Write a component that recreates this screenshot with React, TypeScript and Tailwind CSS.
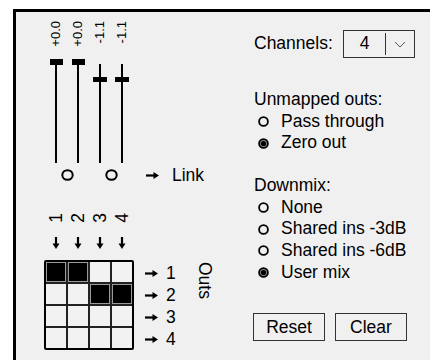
import React from 'react';

const sliders = [
  { label: '+0.0', db: 0 },
  { label: '+0.0', db: 0 },
  { label: '-1.1', db: -1.1 },
  { label: '-1.1', db: -1.1 },
];

const matrix = [
  [1, 1, 0, 0],
  [0, 0, 1, 1],
  [0, 0, 0, 0],
  [0, 0, 0, 0],
];

const ArrowRight = () => (
  <svg width="13" height="9" viewBox="0 0 13 9">
    <path d="M0 4.5H9" stroke="#000" strokeWidth="2.2" />
    <polygon points="7.5,1 13,4.5 7.5,8" fill="#000" />
  </svg>
);

const ArrowDown = () => (
  <svg width="8" height="12" viewBox="0 0 8 12">
    <path d="M4 0V8" stroke="#000" strokeWidth="2.2" />
    <polygon points="0.5,6.5 7.5,6.5 4,12" fill="#000" />
  </svg>
);

const Ring = () => (
  <svg width="13" height="12" viewBox="0 0 13 12">
    <ellipse cx="6.5" cy="6" rx="5.2" ry="4.8" fill="none" stroke="#000" strokeWidth="2" />
  </svg>
);

const Radio = ({ checked }: { checked?: boolean }) => (
  <svg width="11" height="11" viewBox="0 0 11 11">
    <circle cx="5.5" cy="5.5" r="4.4" fill={checked ? '#8a8a8a' : 'none'} stroke="#000" strokeWidth="1.8" />
    {checked && <circle cx="5.5" cy="5.5" r="2.6" fill="#000" />}
  </svg>
);

const RadioRow = ({ label, checked }: { label: string; checked?: boolean }) => (
  <div className="flex items-center pl-[5px]">
    <Radio checked={checked} />
    <span className="ml-[12px]">{label}</span>
  </div>
);

const LeftPanel = () => (
  <div className="w-[237px] pl-[29px] pt-[9px]">
    {/* dB read-outs */}
    <div className="flex h-[37px] items-start">
      {sliders.map((s, i) => (
        <div key={i} className="flex w-[22px] justify-center">
          <span className="rotate-180 text-[13px] leading-[14px] [writing-mode:vertical-rl]">{s.label}</span>
        </div>
      ))}
    </div>

    {/* faders */}
    <div className="flex h-[106px]">
      {sliders.map((s, i) => (
        <div key={i} className="relative flex w-[22px] flex-col items-center">
          <div className="mt-[6px] h-[99px] w-[2px] bg-black" />
          <div
            className={`absolute bg-black ${s.db === 0 ? 'h-[6px] w-[13px]' : 'h-[5px] w-[14px]'}`}
            style={{ top: s.db === 0 ? 1 : 1 + Math.round(-s.db * 16.4) }}
          />
        </div>
      ))}
    </div>

    <div className="flex h-[22px] items-center">
      <div className="flex w-[44px] justify-center">
        <Ring />
      </div>
      <div className="flex w-[44px] justify-center">
        <Ring />
      </div>
      <div className="ml-[13px] flex">
        <ArrowRight />
      </div>
      <span className="ml-[13px]">Link</span>
    </div>

    {/* input numbers */}
    <div className="mt-[22px] flex h-[20px] items-center">
      {[1, 2, 3, 4].map((n) => (
        <div key={n} className="flex w-[22px] justify-center">
          <span className="rotate-180 leading-[17px] [writing-mode:vertical-rl]">{n}</span>
        </div>
      ))}
    </div>
    <div className="mt-[8px] flex h-[14px] items-center">
      {[1, 2, 3, 4].map((n) => (
        <div key={n} className="flex w-[22px] justify-center">
          <ArrowDown />
        </div>
      ))}
    </div>

    <div className="-ml-px mt-[10px] flex items-start">
      <div className="grid w-fit grid-cols-4 gap-[2px] rounded-[2px] border-2 border-black bg-[#222]">
        {matrix.flat().map((v, i) => (
          <div
            key={i}
            className={v ? 'h-[20px] w-[20px] border border-[#9a9a9a] bg-black' : 'h-[20px] w-[20px] bg-[#f2f2f2]'}
          />
        ))}
      </div>
      <div className="ml-[11px] flex flex-col pt-[2px]">
        {[1, 2, 3, 4].map((n) => (
          <div key={n} className="flex h-[22px] items-center">
            <ArrowRight />
            <span className="ml-[8px]">{n}</span>
          </div>
        ))}
      </div>
      <span className="ml-[22px] mt-[2px] leading-[14px] [writing-mode:vertical-rl]">Outs</span>
    </div>
  </div>
);

const RightPanel = () => (
  <div className="flex-1 pt-[18px] leading-[21.67px]">
    <div className="flex h-[28px] items-center">
      <span className="w-[90px] pl-px">Channels:</span>
      <div className="flex h-[28px] w-[72px] border border-[#333]">
        <div className="flex w-[41px] items-center justify-center">4</div>
        <div className="h-[22px] w-px self-center bg-[#333]" />
        <div className="flex flex-1 items-center justify-center">
          <svg width="12" height="7" viewBox="0 0 12 7">
            <polyline points="1,1 6,6 11,1" fill="none" stroke="#555" strokeWidth="1" />
          </svg>
        </div>
      </div>
    </div>

    <div className="mt-[31px] pl-px">Unmapped outs:</div>
    <RadioRow label="Pass through" />
    <RadioRow label="Zero out" checked />

    <div className="mt-[21px] pl-px">Downmix:</div>
    <RadioRow label="None" />
    <RadioRow label="Shared ins -3dB" />
    <RadioRow label="Shared ins -6dB" />
    <RadioRow label="User mix" checked />

    <div className="mt-[30px] flex gap-[10px]">
      <button className="h-[28px] w-[72px] border border-[#333] bg-[#f0f0f0]">Reset</button>
      <button className="h-[28px] w-[72px] border border-[#333] bg-[#f0f0f0]">Clear</button>
    </div>
  </div>
);

export default function App() {
  return (
    <div className="h-[360px] w-[430px] overflow-hidden bg-white pl-[13px] pt-[9px] font-['Liberation_Sans',Arial,sans-serif] text-[17.5px] text-black">
      <div className="flex h-full border-l-[3px] border-t-[3px] border-black bg-[#f0f0f0]">
        <LeftPanel />
        <RightPanel />
      </div>
    </div>
  );
}
